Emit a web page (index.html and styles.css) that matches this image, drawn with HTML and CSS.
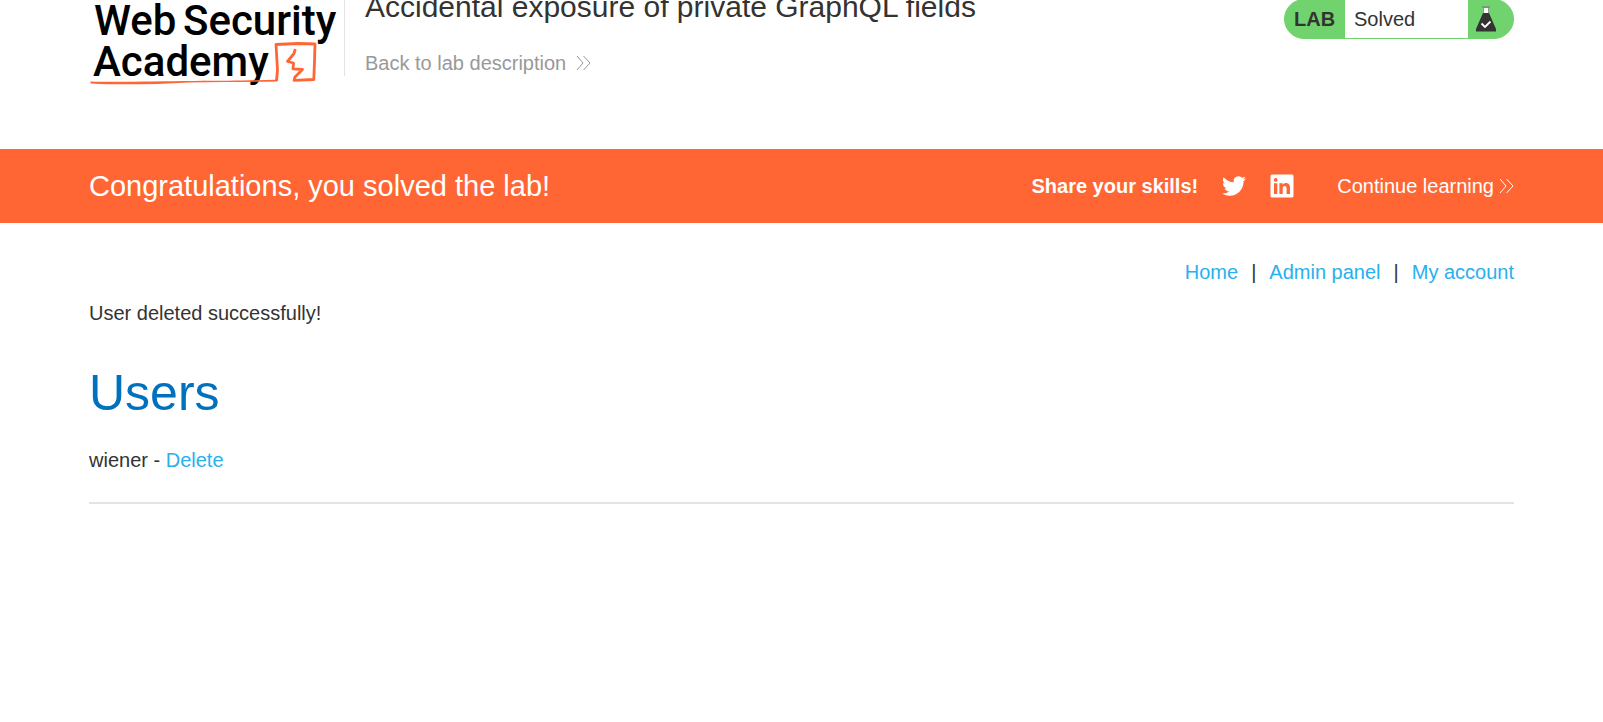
FILE: index.html
```html
<!DOCTYPE html>
<html lang="en">
<head>
<meta charset="utf-8">
<title>Accidental exposure of private GraphQL fields</title>
<link rel="stylesheet" href="styles.css">
</head>
<body>
<header class="lab-header container">
  <a class="logo" href="#" aria-label="Web Security Academy">
    <svg class="logo-art" width="256" height="98" viewBox="0 -10 256 98">
      <g class="logo-text">
        <text x="5" y="35">Web</text>
        <text x="94" y="35">Security</text>
        <text x="4" y="76">Academy</text>
      </g>
      <path d="M1 81.500 C30 82.500 70 81 105 81 C140 80.800 165 80.500 188 79.800 L188 81.500 C160 82 130 82.200 100 82.500 C65 84.500 30 85 2 83.500Z" fill="#ff6633"/>
      <path d="M187.500 81 L188.500 70 L187 44.500 L209 43.500 L226 44 L225.500 62 L224.800 79.500 L205 80.300 L206 77 L213.500 69.500 L204 68.800 L204.500 63 L198.500 61.500 L205 53.500 L206.300 49" fill="none" stroke="#ff6633" stroke-width="2.800" stroke-linejoin="round"/>
    </svg>
  </a>
  <div class="title-block">
    <h1 class="lab-title">Accidental exposure of private GraphQL fields</h1>
    <a class="back-link" href="#">Back to lab description
      <svg class="chevrons" viewBox="0 0 15 16"><path d="M1 1 L7 8 L1 15 M7.500 1 L14 8 L7.500 15"/></svg>
    </a>
  </div>
  <div class="status">
    <span class="status-label">LAB</span>
    <span class="status-text">Solved</span>
    <span class="status-icon">
      <svg width="20" height="26" viewBox="0 0 20 26">
        <path d="M7.500 1.500 H12.500 V8 H7.500Z" fill="#fff" stroke="#888" stroke-width=".8"/>
        <path d="M6 1 H14" stroke="#777" stroke-width="1"/>
        <path d="M7 7 H13 L20 23 V25.500 H0 V23Z" fill="#333332"/>
        <path d="M5.500 17.500 L9 21 L14.500 15.500" fill="none" stroke="#fff" stroke-width="1.800"/>
      </svg>
    </span>
  </div>
</header>
<section class="banner">
  <div class="container banner-row">
    <h2 class="banner-title">Congratulations, you solved the lab!</h2>
    <span class="share">Share your skills!</span>
    <a class="social" href="#" aria-label="Twitter">
      <svg width="24" height="24" viewBox="0 0 24 24"><path fill="#fff" d="M23.950 4.570a10 10 0 0 1-2.820.780 4.960 4.960 0 0 0 2.160-2.730c-.950.560-2 .960-3.130 1.190a4.920 4.920 0 0 0-8.380 4.480C7.690 8.100 4.070 6.130 1.640 3.160a4.820 4.820 0 0 0-.670 2.480c0 1.710.870 3.210 2.190 4.100a4.900 4.900 0 0 1-2.230-.620v.060a4.920 4.920 0 0 0 3.950 4.830 5 5 0 0 1-2.210.080 4.940 4.940 0 0 0 4.600 3.420A9.870 9.870 0 0 1 0 19.540a14 14 0 0 0 7.550 2.210c9.050 0 14-7.500 14-13.980l-.020-.630a10 10 0 0 0 2.420-2.570z"/></svg>
    </a>
    <a class="social" href="#" aria-label="LinkedIn">
      <svg width="24" height="24" viewBox="0 0 24 24"><path fill="#fff" fill-rule="evenodd" d="M2 .5H22Q23.500 .5 23.500 2V22Q23.500 23.500 22 23.500H2Q.5 23.500 .5 22V2Q.5 .5 2 .5ZM4 9.200V20H7.300V9.200ZM5.700 4A1.900 1.900 0 1 0 5.700 7.800A1.900 1.900 0 1 0 5.700 4ZM9.400 9.200V20H12.700V14.500C12.700 11 16.600 11.200 16.600 14.200V20H20V13.500C20 8 14.500 8 12.700 10.700V9.200Z"/></svg>
    </a>
    <a class="continue" href="#">Continue learning
      <svg class="chevrons" viewBox="0 0 15 16"><path d="M1 1 L7 8 L1 15 M7.500 1 L14 8 L7.500 15"/></svg>
    </a>
  </div>
</section>
<main class="container">
  <nav class="nav">
    <a href="#">Home</a><span>|</span><a href="#">Admin panel</a><span>|</span><a href="#">My account</a>
  </nav>
  <p class="message">User deleted successfully!</p>
  <h2 class="users-title">Users</h2>
  <p class="user">wiener - <a href="#">Delete</a></p>
  <hr class="rule">
</main>
</body>
</html>
```

FILE: styles.css
```css
* {
  box-sizing: border-box;
}

body {
  margin: 0;
  background: #fff;
  color: #333332;
  font-family: "Liberation Sans", Arial, sans-serif;
  font-size: 20px;
  line-height: 24px;
}

h1,
h2,
p {
  margin: 0;
  font-weight: 400;
}

a {
  color: #29b0ee;
  text-decoration: none;
}

.container {
  padding: 0 89px;
}

.lab-header {
  display: flex;
  align-items: flex-start;
  margin-top: -10px;
  padding-bottom: 61px;
}

.logo,
.logo-art {
  display: block;
}

.logo-text {
  fill: #000;
  font-family: Roboto, sans-serif;
  font-size: 42px;
  font-weight: 500;
}

.title-block {
  flex: 1;
  margin-left: -1px;
  padding: 0 20px 1px;
  border-left: 1px solid #e4e4e4;
}

.lab-title {
  font-size: 30px;
  line-height: 34px;
}

.back-link {
  display: flex;
  align-items: center;
  gap: 10px;
  margin-top: 27px;
  color: #999;
}

.chevrons {
  width: 15px;
  height: 16px;
  fill: none;
  stroke: currentColor;
  stroke-width: 1;
}

.status {
  display: flex;
  height: 40px;
  margin-top: 9px;
  border: 1px solid #70d36d;
  border-radius: 20px;
  background: #70d36d;
  overflow: hidden;
}

.status-label,
.status-icon {
  display: flex;
  align-items: center;
}

.status-label {
  width: 60px;
  padding-left: 9px;
  font-weight: 700;
}

.status-text {
  width: 123px;
  padding: 7px 9px;
  background: #fff;
}

.status-icon {
  width: 45px;
  padding-left: 8px;
}

.banner {
  background: #f63;
  color: #fff;
}

.banner-row {
  display: flex;
  align-items: center;
  min-height: 74px;
}

.banner-title {
  flex: 1;
  font-size: 29px;
  line-height: 34px;
}

.share {
  font-weight: 700;
}

.social {
  display: flex;
  margin-left: 24px;
}

.continue {
  display: flex;
  align-items: center;
  gap: 5px;
  margin-left: 43px;
  color: #fff;
}

.nav {
  display: flex;
  justify-content: flex-end;
  gap: 13px;
  padding-top: 37px;
}

.message {
  margin-top: 17px;
}

.users-title {
  margin-top: 38px;
  color: #0071bd;
  font-size: 50px;
  line-height: 60px;
}

.user {
  margin-top: 25px;
}

.rule {
  height: 2px;
  margin: 30px 0 0;
  border: 0;
  background: #e4e4e4;
}
```
